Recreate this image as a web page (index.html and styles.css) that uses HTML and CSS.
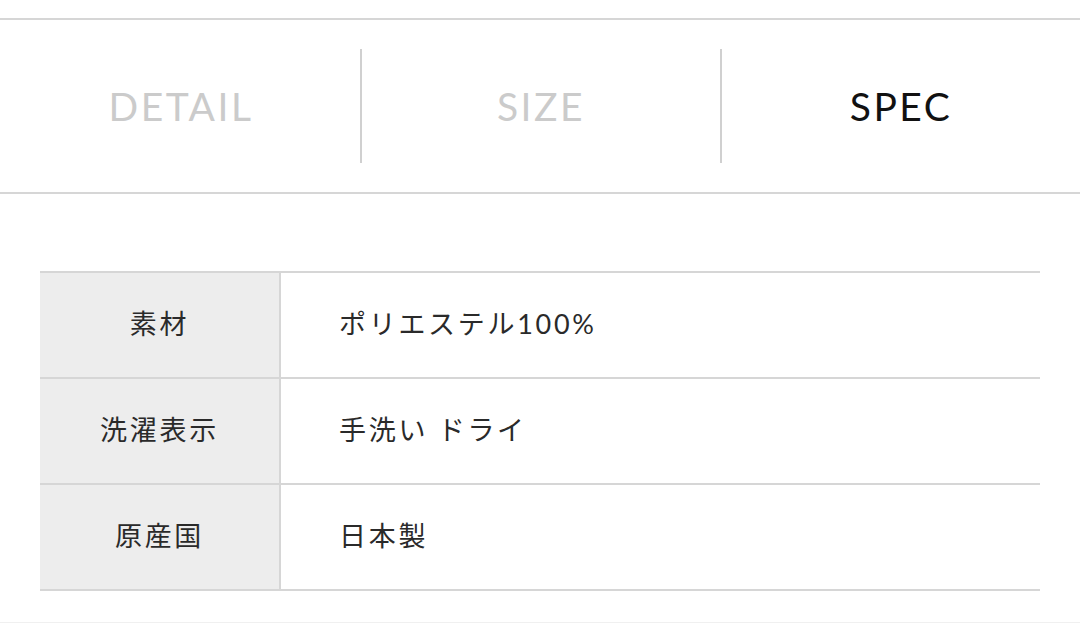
FILE: index.html
```html
<!DOCTYPE html>
<html lang="ja">
<head>
    <meta charset="UTF-8">
    <meta name="viewport" content="width=device-width, initial-scale=1.0">
    <title>SPEC</title>
    <link rel="stylesheet" href="styles.css">
</head>
<body>
    <div class="tabs">
        <div class="tab">DETAIL</div>
        <div class="tab">SIZE</div>
        <div class="tab tab-active">SPEC</div>
    </div>

    <table class="spec-table">
        <tr>
            <th>素材</th>
            <td>ポリエステル100%</td>
        </tr>
        <tr>
            <th>洗濯表示</th>
            <td>手洗い ドライ</td>
        </tr>
        <tr>
            <th>原産国</th>
            <td>日本製</td>
        </tr>
    </table>

    <div class="page-end"></div>
</body>
</html>
```

FILE: styles.css
```css
body{
    margin:0;
    background-color:white;
    color:#222;
    font-family:Lato, "Noto Sans CJK JP", sans-serif;
}

.tabs{
    display:flex;
    margin-top:18px;
    padding:29px 0 29px 2px;
    border-top:2px solid #d6d6d6;
    border-bottom:2px solid #d6d6d6;
}

    .tab{
        flex:1;
        height:114px;
        display:flex;
        align-items:center;
        justify-content:center;
        font-size:39px;
        letter-spacing:2.5px;
        color:#cbcbcb;
    }
    .tab + .tab{
        border-left:2px solid #d0d0d0;
    }
    .tab-active{
        color:#111;
    }

.spec-table{
    width:1000px;
    margin:77px 0 0 40px;
    border-collapse:collapse;
    font-family:Lato, "Noto Sans CJK JP", sans-serif;
    font-size:27px;
    line-height:32px;
    letter-spacing:2.7px;
}

    .spec-table th,
    .spec-table td{
        height:106px;
        padding:0 0 2px 0;
        box-sizing:border-box;
        border-top:2px solid #d6d6d6;
        border-bottom:2px solid #d6d6d6;
        font-weight:normal;
        color:#2a2a2a;
    }
    .spec-table th{
        width:240px;
        background-color:#ededed;
        border-right:2px solid #d6d6d6;
        text-align:center;
    }
    .spec-table td{
        padding-left:58px;
        text-align:left;
    }

.page-end{
    margin-top:31px;
    border-top:1px solid #f0f0f0;
}
```
